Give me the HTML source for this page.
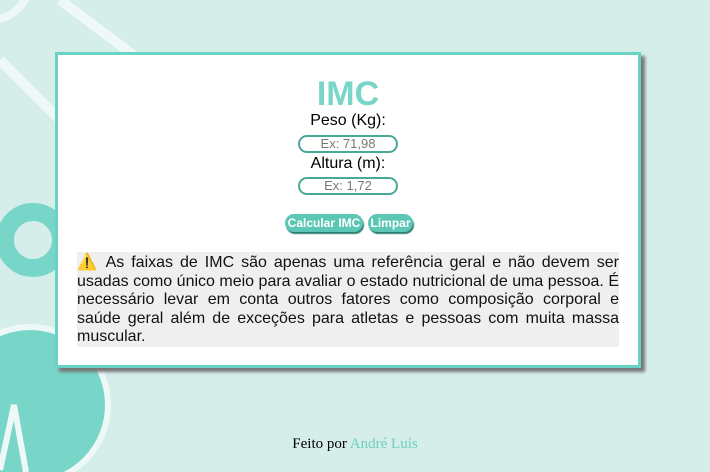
<!DOCTYPE html><html><head><style>
body{margin:0;width:710px;height:472px;background:#d5eeea;font-family:"Liberation Sans",sans-serif;position:relative;overflow:hidden}
.card{position:absolute;left:55px;top:52px;width:580px;height:310px;background:#fff;border:3px solid #6ad3c3;box-shadow:4px 4px 3px #777}
h1{margin:0;position:absolute;top:20px;width:100%;text-align:center;color:#77d6c8;font-size:34px;font-weight:bold}
.lab{position:absolute;width:100%;text-align:center;font-size:16px;color:#000}
.in{position:absolute;left:240px;width:96px;height:14px;border:2px solid #4aa897;border-radius:10px;font-size:13px;color:#777;text-align:center;line-height:14px}
.btn{position:absolute;top:159px;height:18px;background:#5dc7b5;color:#fff;font-weight:bold;font-size:12px;border-radius:9px;line-height:18px;text-align:center;box-shadow:1px 2px 1px #2e7f72}
.txt{position:absolute;left:19px;top:197px;width:542px;padding-top:2px;background:#efefef;font-size:16px;line-height:18.5px;text-align:justify;color:#111}
</style></head><body>
<svg width="710" height="472" style="position:absolute;left:0;top:0">
<circle cx="-10" cy="-20" r="40" fill="none" stroke="#eef9f7" stroke-width="8"/>
<line x1="60" y1="0" x2="140" y2="60" stroke="#eef9f7" stroke-width="10"/>
<line x1="0" y1="60" x2="60" y2="120" stroke="#eef9f7" stroke-width="10"/>
<circle cx="33" cy="240" r="28" fill="none" stroke="#78d6c8" stroke-width="18"/>
<circle cx="30" cy="405" r="78" fill="#78d6c8" stroke="#eef9f7" stroke-width="6"/>
<polyline points="0,470 14,405 26,472" fill="none" stroke="#eef9f7" stroke-width="6"/>
</svg>
<div class="card">
<h1>IMC</h1>
<div class="lab" style="top:57px">Peso (Kg):</div>
<div class="in" style="top:80px">Ex: 71,98</div>
<div class="lab" style="top:100px">Altura (m):</div>
<div class="in" style="top:122px">Ex: 1,72</div>
<div class="btn" style="left:227px;width:78px">Calcular IMC</div>
<div class="btn" style="left:310px;width:45px">Limpar</div>
<div class="txt">⚠️ As faixas de IMC são apenas uma referência geral e não devem ser usadas como único meio para avaliar o estado nutricional de uma pessoa. É necessário levar em conta outros fatores como composição corporal e saúde geral além de exceções para atletas e pessoas com muita massa muscular.</div>
</div>
<div style="position:absolute;top:436px;width:100%;text-align:center;font-family:'Liberation Serif',serif;font-size:15px">Feito por <span style="color:#6dd0c0">André Luís</span></div>
</body></html>
